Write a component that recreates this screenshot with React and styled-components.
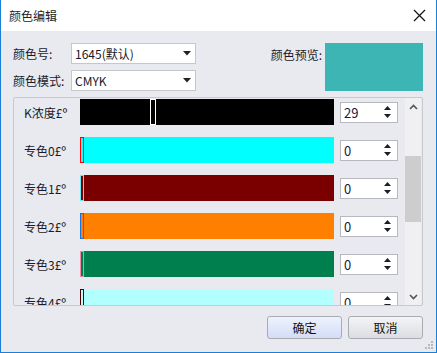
import React from 'react'
import styled, {createGlobalStyle} from 'styled-components'

const FONT = `"Noto Sans CJK SC", "Liberation Sans", sans-serif`

const ROWS = [
  {label: 'K浓度£º', color: '#000000', handle: '#ffffff', pos: 70, handleWidth: 6, value: 29},
  {label: '专色0£º', color: '#00ffff', handle: '#ff0000', pos: 0, handleWidth: 4, value: 0},
  {label: '专色1£º', color: '#7a0000', handle: '#6ee8f0', pos: 0, handleWidth: 4, value: 0},
  {label: '专色2£º', color: '#ff8000', handle: '#1a72e0', pos: 0, handleWidth: 4, value: 0},
  {label: '专色3£º', color: '#007f4e', handle: '#f08aa8', pos: 0, handleWidth: 4, value: 0},
  {label: '专色4£º', color: '#b2ffff', handle: '#4a0000', pos: 0, handleWidth: 4, value: 0},
]

const GlobalStyle = createGlobalStyle`
  html, body {
    margin: 0;
    padding: 0;
    background: #ffffff;
  }
  * {
    box-sizing: border-box;
  }
`

const SpinArrows = () => (
  <svg width="9" height="14" viewBox="0 0 9 14">
    <path d="M4.5 1 L8 5 L1 5 Z" fill="#1c1c2c" />
    <path d="M1 9 L8 9 L4.5 13 Z" fill="#1c1c2c" />
  </svg>
)

const ComboArrow = () => (
  <svg width="8" height="5" viewBox="0 0 8 5">
    <path d="M0 0 L8 0 L4 4.5 Z" fill="#222" />
  </svg>
)

const App = () => {
  return (
    <>
      <GlobalStyle />
      <Window>
        <TitleBar>
          <Title>颜色编辑</Title>
          <CloseButton>
            <svg width="13" height="13" viewBox="0 0 13 13">
              <path d="M1 1 L12 12 M12 1 L1 12" stroke="#111" strokeWidth="1.2" />
            </svg>
          </CloseButton>
        </TitleBar>
        <Body>
          <Header>
            <FieldGrid>
              <Label>颜色号:</Label>
              <Combo>
                <span>1645(默认)</span>
                <ComboArrow />
              </Combo>
              <Label>颜色模式:</Label>
              <Combo>
                <span>CMYK</span>
                <ComboArrow />
              </Combo>
            </FieldGrid>
            <Preview>
              <Label>颜色预览:</Label>
              <Swatch />
            </Preview>
          </Header>
          <Panel>
            <Rows>
              {ROWS.map(row => (
                <Row key={row.label}>
                  <RowLabel>{row.label}</RowLabel>
                  <Bar $color={row.color}>
                    <Handle
                      $color={row.handle}
                      $width={row.handleWidth}
                      style={{left: row.pos}}
                    />
                  </Bar>
                  <Spin>
                    <span>{row.value}</span>
                    <SpinArrows />
                  </Spin>
                </Row>
              ))}
            </Rows>
            <ScrollBar>
              <ScrollArrow>
                <svg width="9" height="6" viewBox="0 0 9 6">
                  <path d="M1 5 L4.5 1.5 L8 5" stroke="#555" strokeWidth="1.6" fill="none" />
                </svg>
              </ScrollArrow>
              <Track>
                <Thumb />
              </Track>
              <ScrollArrow>
                <svg width="9" height="6" viewBox="0 0 9 6">
                  <path d="M1 1 L4.5 4.5 L8 1" stroke="#555" strokeWidth="1.6" fill="none" />
                </svg>
              </ScrollArrow>
            </ScrollBar>
          </Panel>
          <Footer>
            <Button $primary>确定</Button>
            <Button>取消</Button>
          </Footer>
          <Grip>
            <svg width="9" height="9" viewBox="0 0 9 9">
              <rect x="6" y="0" width="2" height="2" fill="#b8b8bc" />
              <rect x="3" y="3" width="2" height="2" fill="#b8b8bc" />
              <rect x="6" y="3" width="2" height="2" fill="#b8b8bc" />
              <rect x="0" y="6" width="2" height="2" fill="#b8b8bc" />
              <rect x="3" y="6" width="2" height="2" fill="#b8b8bc" />
              <rect x="6" y="6" width="2" height="2" fill="#b8b8bc" />
            </svg>
          </Grip>
        </Body>
      </Window>
    </>
  )
}

const Window = styled.div`
  width: 437px;
  height: 353px;
  display: flex;
  flex-direction: column;
  border-left: 1px solid #1a7fd8;
  border-right: 1px solid #1a7fd8;
  border-bottom: 1px solid #1a7fd8;
  font-family: ${FONT};
  font-size: 12px;
  color: #1a1a2a;
`

const TitleBar = styled.div`
  height: 31px;
  flex-shrink: 0;
  display: flex;
  align-items: center;
  justify-content: space-between;
  padding-left: 8px;
  padding-right: 5px;
  background: #ffffff;
`

const Title = styled.div`
  font-size: 12px;
  color: #222;
`

const CloseButton = styled.div`
  width: 24px;
  height: 24px;
  display: flex;
  align-items: center;
  justify-content: center;
`

const Body = styled.div`
  position: relative;
  flex: 1;
  display: flex;
  flex-direction: column;
  background: #e9eaef;
  padding: 12px 13px 0 12px;
`

const Header = styled.div`
  display: flex;
  justify-content: space-between;
  align-items: flex-start;
`

const FieldGrid = styled.div`
  display: grid;
  grid-template-columns: 58px 125px;
  row-gap: 6px;
  align-items: center;
`

const Label = styled.div`
  font-size: 12px;
  color: #1a1a2a;
`

const Combo = styled.div`
  height: 21px;
  display: flex;
  align-items: center;
  justify-content: space-between;
  padding: 0 4px 0 3px;
  background: #ffffff;
  border: 1px solid #c6c7cd;
  font-size: 12px;
`

const Preview = styled.div`
  display: flex;
  gap: 3px;
  align-items: flex-start;
  padding-top: 3px;

  & > div:first-child {
    margin-top: 0;
  }
`

const Swatch = styled.div`
  width: 98px;
  height: 48px;
  margin-top: -3px;
  background: #3db5b5;
`

const Panel = styled.div`
  margin-top: 6px;
  width: 410px;
  height: 209px;
  display: flex;
  border: 1px solid #c8c8cd;
  border-radius: 2px;
  overflow: hidden;
`

const Rows = styled.div`
  flex: 1;
  display: flex;
  flex-direction: column;
  gap: 12px;
  padding: 1px 0 0 10px;
  overflow: hidden;
`

const Row = styled.div`
  display: flex;
  align-items: center;
  flex-shrink: 0;
  height: 26px;
`

const RowLabel = styled.div`
  width: 56px;
  font-size: 12px;
  color: #1a1a2a;
`

const Bar = styled.div`
  position: relative;
  width: 254px;
  height: 26px;
  background: ${p => p.$color};
`

const Handle = styled.div`
  position: absolute;
  top: 0;
  bottom: 0;
  width: ${p => p.$width}px;
  border: 1px solid ${p => p.$color};
`

const Spin = styled.div`
  margin-left: 6px;
  width: 58px;
  height: 21px;
  display: flex;
  align-items: center;
  justify-content: space-between;
  padding: 0 5px 0 3px;
  background: #ffffff;
  border: 1px solid #b8b9c0;
  font-size: 13px;
  color: #1a1a3a;
`

const ScrollBar = styled.div`
  width: 16px;
  margin-right: 1px;
  display: flex;
  flex-direction: column;
  background: #f0f0f2;
`

const ScrollArrow = styled.div`
  height: 17px;
  display: flex;
  align-items: center;
  justify-content: center;
`

const Track = styled.div`
  flex: 1;
  padding-top: 41px;
`

const Thumb = styled.div`
  height: 66px;
  background: #cdcdcd;
`

const Footer = styled.div`
  margin-top: 10px;
  display: flex;
  justify-content: flex-end;
  gap: 6px;
`

const Button = styled.div`
  width: 75px;
  height: 23px;
  display: flex;
  align-items: center;
  justify-content: center;
  border: 1px solid #a9abb3;
  border-radius: 3px;
  font-size: 12px;
  color: #111;
  background: ${p => p.$primary
    ? 'linear-gradient(#eef2fd, #d3ddf7)'
    : 'linear-gradient(#f4f4f6, #dcdde2)'};
`

const Grip = styled.div`
  position: absolute;
  right: 2px;
  bottom: 2px;
  display: flex;
`

export default App
